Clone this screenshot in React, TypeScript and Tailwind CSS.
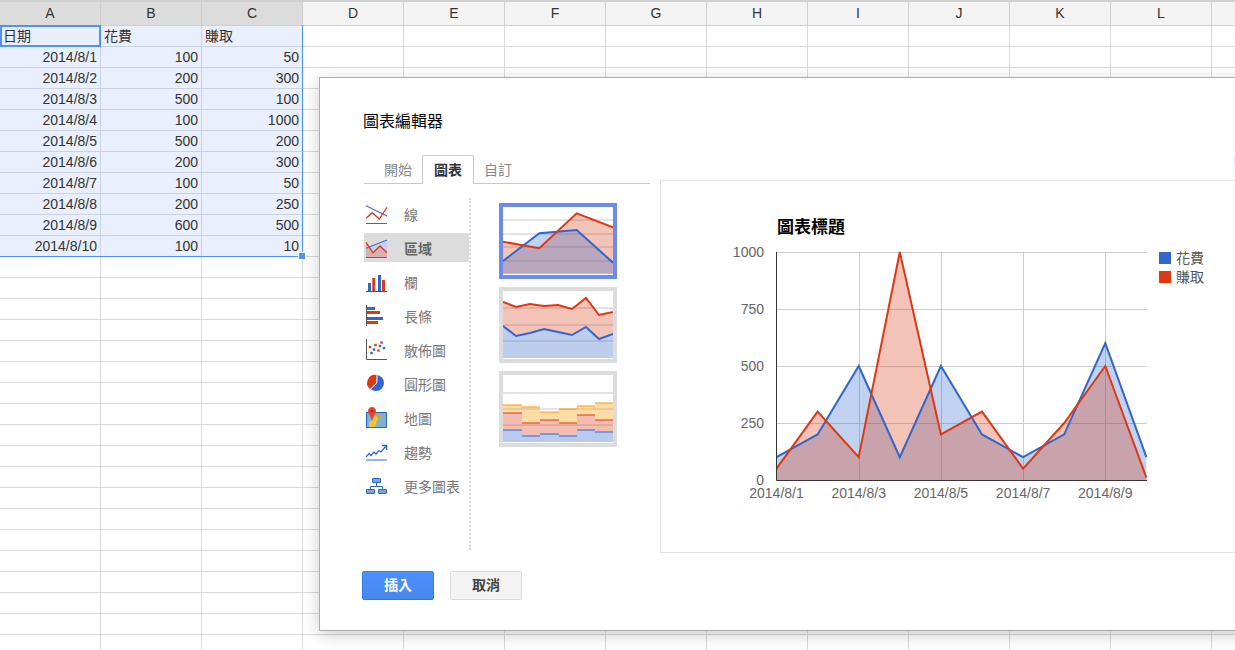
const cols = ["A", "B", "C", "D", "E", "F", "G", "H", "I", "J", "K", "L", ""];

const data = [
  ["日期", "花費", "賺取"],
  ["2014/8/1", "100", "50"],
  ["2014/8/2", "200", "300"],
  ["2014/8/3", "500", "100"],
  ["2014/8/4", "100", "1000"],
  ["2014/8/5", "500", "200"],
  ["2014/8/6", "200", "300"],
  ["2014/8/7", "100", "50"],
  ["2014/8/8", "200", "250"],
  ["2014/8/9", "600", "500"],
  ["2014/8/10", "100", "10"],
];

const spend = [100, 200, 500, 100, 500, 200, 100, 200, 600, 100];
const earn = [50, 300, 100, 1000, 200, 300, 50, 250, 500, 10];

const px = (i: number) => 776.5 + i * 41.1;
const py = (v: number) => 480 - v * 0.228;
const line = (vals: number[]) => vals.map((v, i) => `${px(i)},${py(v)}`).join(" ");
const area = (vals: number[]) => `${px(0)},480 ${line(vals)} ${px(9)},480`;

function Sheet() {
  const rows = Array.from({ length: 30 }, (_, i) => i);
  return (
    <div className="flex flex-col">
      <div className="flex h-[26px] border-t-2 border-[#d0d0d0]">
        {cols.map((c, i) => (
          <div
            key={i}
            className={`w-[101px] shrink-0 flex items-center justify-center border-r border-b border-[#cfcfcf] text-[14px] text-[#333] ${i < 3 ? "bg-[#dcdcdc]" : "bg-[#f3f3f3]"}`}
          >
            {c}
          </div>
        ))}
      </div>
      {rows.map((r) => (
        <div key={r} className="flex h-[21px]">
          {cols.map((c, i) => {
            const value = i < 3 && data[r] ? data[r][i] : "";
            const selected = i < 3 && r < 11;
            return (
              <div
                key={i}
                className={`w-[101px] shrink-0 border-r border-b px-[3px] text-[14px] leading-[20px] text-[#333] whitespace-nowrap overflow-hidden ${selected ? "bg-[#e9effc] border-[#cbd2e0]" : "bg-white border-[#d9d9d9]"} ${r > 0 ? "text-right" : "text-left"}`}
              >
                {value}
              </div>
            );
          })}
        </div>
      ))}
    </div>
  );
}

function LineIcon() {
  return (
    <svg width="24" height="24" viewBox="0 0 24 24" fill="none">
      <path d="M1 2.7 22 13" stroke="#3a6fd8" strokeWidth="1.2" />
      <path d="M1 15.3 7.3 9.7 14.3 16 22 4.3" stroke="#dc3912" strokeWidth="1.3" />
      <path d="M1 20.5H22" stroke="#666" strokeWidth="1" />
    </svg>
  );
}

function AreaIcon() {
  return (
    <svg width="24" height="24" viewBox="0 0 24 24" fill="none">
      <path d="M1 11.3 22 3V20H1Z" fill="#c5d3f0" />
      <path d="M1 5.3 8 15.7 15 9 22 15.7V20.5H1Z" fill="#d8b2b2" />
      <path d="M1 11.3 22 3" stroke="#3a6fd8" strokeWidth="1.2" />
      <path d="M1 5.3 8 15.7 15 9 22 15.7" stroke="#dc3912" strokeWidth="1.3" />
      <path d="M1 20.5H22" stroke="#666" strokeWidth="1" />
    </svg>
  );
}

function ColumnIcon() {
  return (
    <svg width="24" height="24" viewBox="0 0 24 24" fill="none">
      <rect x="3" y="12" width="3" height="8" fill="#3366cc" />
      <rect x="7.3" y="7" width="3" height="13" fill="#dc3912" />
      <rect x="13" y="4" width="3" height="16" fill="#3366cc" />
      <rect x="17" y="9" width="3" height="11" fill="#dc3912" />
      <path d="M1 20.5H22" stroke="#555" strokeWidth="1" />
    </svg>
  );
}

function BarIcon() {
  return (
    <svg width="24" height="24" viewBox="0 0 24 24" fill="none">
      <rect x="2" y="2" width="8" height="3" fill="#3366cc" />
      <rect x="2" y="6" width="13" height="3" fill="#dc3912" />
      <rect x="2" y="12" width="16" height="3" fill="#3366cc" />
      <rect x="2" y="16" width="11" height="3" fill="#dc3912" />
      <path d="M1.5 0V21" stroke="#555" strokeWidth="1" />
    </svg>
  );
}

function ScatterIcon() {
  const red = [[5, 8], [10.5, 6], [13.5, 11.5], [16.5, 3.5]];
  const blue = [[6.5, 14], [9, 10.5], [15, 7], [19, 9]];
  return (
    <svg width="24" height="24" viewBox="0 0 24 24" fill="none">
      <path d="M1.5 0V20.5H22" stroke="#555" strokeWidth="1" />
      {red.map(([x, y]) => (
        <rect key={`${x}`} x={x - 1.2} y={y - 1.2} width="2.4" height="2.4" fill="#dc3912" />
      ))}
      {blue.map(([x, y]) => (
        <rect key={`${x}`} x={x - 1.2} y={y - 1.2} width="2.4" height="2.4" fill="#3366cc" />
      ))}
    </svg>
  );
}

function PieIcon() {
  return (
    <svg width="24" height="24" viewBox="0 0 24 24" fill="none">
      <circle cx="11" cy="10" r="8" fill="#3366cc" />
      <path d="M11.6 9.6 5 16A8 8 0 0 1 11.6 2Z" fill="#dc3912" />
      <path d="M12 2 11.8 10 5.5 16" stroke="#fff" strokeWidth="1" />
    </svg>
  );
}

function MapIcon() {
  return (
    <svg width="24" height="24" viewBox="0 0 24 24" fill="none">
      <rect x="1.5" y="5.5" width="20" height="15" fill="#7fb1d3" stroke="#2f62b8" />
      <path d="M4 20V15L8 13 9 9 13 8 15 10 12 14 10 20Z" fill="#f1c232" />
      <path d="M11 7 15 6 17 10 13 12Z" fill="#b9a66b" />
      <path d="M7 0C4.5 0 3 2 3 4C3 7 6 9 7 14C8 9 11 7 11 4C11 2 9.5 0 7 0Z" fill="#e0452f" />
      <circle cx="7" cy="4" r="1.3" fill="#a52714" />
    </svg>
  );
}

function TrendIcon() {
  return (
    <svg width="24" height="24" viewBox="0 0 24 24" fill="none">
      <path d="M1 16 4 12.5 6 14.5 9 11 11 13 14 9.5 16 11 21 5" stroke="#3366cc" strokeWidth="1.2" />
      <path d="M17 4.5H21.5V9" stroke="#3366cc" strokeWidth="1.5" />
      <path d="M1 19H22" stroke="#3366cc" strokeWidth="1" />
    </svg>
  );
}

function MoreIcon() {
  return (
    <svg width="24" height="24" viewBox="0 0 24 24" fill="none">
      <rect x="7.5" y="3.5" width="8" height="4" rx="0.5" fill="#7ea3e0" stroke="#2f62b8" />
      <rect x="1.5" y="14.5" width="8" height="4" rx="0.5" fill="#7ea3e0" stroke="#2f62b8" />
      <rect x="13.5" y="14.5" width="8" height="4" rx="0.5" fill="#7ea3e0" stroke="#2f62b8" />
      <path d="M11.5 7.5V11.5M5.5 14.5V11.5H17.5V14.5" stroke="#2f62b8" strokeWidth="1" />
    </svg>
  );
}

const chartTypes = [
  { label: "線", icon: <LineIcon /> },
  { label: "區域", icon: <AreaIcon />, active: true },
  { label: "欄", icon: <ColumnIcon /> },
  { label: "長條", icon: <BarIcon /> },
  { label: "散佈圖", icon: <ScatterIcon /> },
  { label: "圓形圖", icon: <PieIcon /> },
  { label: "地圖", icon: <MapIcon /> },
  { label: "趨勢", icon: <TrendIcon /> },
  { label: "更多圖表", icon: <MoreIcon /> },
];

function ThumbGrid({ ys }: { ys: number[] }) {
  return (
    <>
      {ys.map((y) => (
        <path key={y} d={`M0 ${y}H110`} stroke="#c8c8c8" strokeWidth="1" />
      ))}
    </>
  );
}

function ThumbOverlap() {
  return (
    <svg width="110" height="68" viewBox="0 0 110 68" className="block">
      <ThumbGrid ys={[13, 27, 40, 54]} />
      <path d="M0 34.7 36.3 41.3 73.7 6.3 110 20.3V66.7H0Z" fill="#dc3912" fillOpacity="0.3" />
      <path d="M0 54 36.3 26.3 73.7 23 110 55.7V66.7H0Z" fill="#3366cc" fillOpacity="0.3" />
      <path d="M0 54 36.3 26.3 73.7 23 110 55.7" stroke="#3366cc" strokeWidth="2" fill="none" />
      <path d="M0 34.7 36.3 41.3 73.7 6.3 110 20.3" stroke="#dc3912" strokeWidth="2" fill="none" />
    </svg>
  );
}

function ThumbStacked() {
  const xs = [0, 13, 27, 41, 55, 69, 83, 96, 110];
  const red = [11, 16, 13, 15, 14, 18, 7, 24, 21];
  const blue = [35, 45, 42, 38, 41, 44, 36, 48, 43];
  const rp = xs.map((x, i) => `${x},${red[i]}`).join(" ");
  const bp = xs.map((x, i) => `${x},${blue[i]}`).join(" ");
  return (
    <svg width="110" height="68" viewBox="0 0 110 68" className="block">
      <ThumbGrid ys={[17, 34, 50]} />
      <polygon points={`0,67 ${bp} 110,67`} fill="#3366cc" fillOpacity="0.33" />
      <polygon points={`${rp} ${[...xs].reverse().map((x, i) => `${x},${[...blue].reverse()[i]}`).join(" ")}`} fill="#dc3912" fillOpacity="0.3" />
      <polyline points={bp} stroke="#3366cc" strokeWidth="2" fill="none" />
      <polyline points={rp} stroke="#dc3912" strokeWidth="2" fill="none" />
    </svg>
  );
}

function ThumbStepped() {
  const edges = [0, 19, 37, 56, 74, 92, 110];
  const blue = [55, 61, 59, 61, 55, 57];
  const red = [38, 48, 45, 48, 40, 45];
  const orange = [30, 32, 37, 34, 31, 28];
  return (
    <svg width="110" height="68" viewBox="0 0 110 68" className="block">
      <ThumbGrid ys={[18, 34, 50]} />
      {edges.slice(0, 6).map((x, i) => {
        const w = edges[i + 1] - x;
        return (
          <g key={x}>
            <rect x={x} y={orange[i]} width={w} height={red[i] - orange[i]} fill="#ff9900" fillOpacity="0.35" />
            <rect x={x} y={red[i]} width={w} height={blue[i] - red[i]} fill="#dc3912" fillOpacity="0.33" />
            <rect x={x} y={blue[i]} width={w} height={67 - blue[i]} fill="#3366cc" fillOpacity="0.35" />
            <path d={`M${x} ${orange[i]}h${w}`} stroke="#ff9900" strokeWidth="1" />
            <path d={`M${x} ${red[i]}h${w}`} stroke="#dc3912" strokeWidth="1" />
            <path d={`M${x} ${blue[i]}h${w}`} stroke="#3366cc" strokeWidth="1" />
          </g>
        );
      })}
    </svg>
  );
}

function Chart() {
  const ticks = [
    { v: 0, label: "0" },
    { v: 250, label: "250" },
    { v: 500, label: "500" },
    { v: 750, label: "750" },
    { v: 1000, label: "1000" },
  ];
  return (
    <svg width="580" height="371" viewBox="661 181 580 371" className="block">
      <text x="777" y="233" fontSize="17" fontWeight="700" fill="#000">圖表標題</text>
      {ticks.slice(1).map((t) => (
        <path key={t.v} d={`M776 ${py(t.v) + 0.5}H1147`} stroke="#cccccc" />
      ))}
      {[2, 4, 6, 8].map((i) => (
        <path key={i} d={`M${Math.round(px(i)) + 0.5} 252V480`} stroke="#cccccc" />
      ))}
      <polygon points={area(spend)} fill="#3366cc" fillOpacity="0.3" />
      <polygon points={area(earn)} fill="#dc3912" fillOpacity="0.3" />
      <polyline points={line(spend)} fill="none" stroke="#3366cc" strokeWidth="2" />
      <polyline points={line(earn)} fill="none" stroke="#dc3912" strokeWidth="2" />
      <path d="M776.5 252V480.5H1147" fill="none" stroke="#333" />
      {ticks.map((t) => (
        <text key={t.v} x="764" y={py(t.v) + 5} fontSize="14" textAnchor="end" fill="#666">{t.label}</text>
      ))}
      {[1, 3, 5, 7, 9].map((d, i) => (
        <text key={d} x={px(i * 2)} y="498" fontSize="14" textAnchor="middle" fill="#666">{`2014/8/${d}`}</text>
      ))}
      <rect x="1159" y="252" width="12" height="12" fill="#3366cc" />
      <text x="1176" y="263" fontSize="14" fill="#555">花費</text>
      <rect x="1159" y="271" width="12" height="12" fill="#dc3912" />
      <text x="1176" y="282" fontSize="14" fill="#555">賺取</text>
    </svg>
  );
}

function Dialog() {
  return (
    <div className="absolute left-[319px] top-[77px] w-[1000px] h-[554px] bg-white border border-[#acacac] shadow-[0_4px_16px_rgba(0,0,0,0.2)] flex flex-col pl-[43px] text-[#333]">
      <div className="mt-[33px] h-[22px] text-[16px] leading-[22px] text-black">圖表編輯器</div>

      <div className="absolute left-[914px] top-[78px] w-[2px] h-[9px] bg-[#dfe3f5]" />

      <div className="flex gap-[10px] items-start">
        <div className="w-[286px] shrink-0 ml-px">
          <div className="mt-[22px] flex h-[29px] border-b border-[#c8c8c8] pl-[20px] text-[14px]">
            <div className="pt-[5px] text-[#888]">開始</div>
            <div className="ml-[10px] -mb-px w-[52px] border border-b-white border-[#c8c8c8] rounded-t-[2px] bg-white text-center pt-[4px] font-bold text-[#333]">圖表</div>
            <div className="ml-[10px] pt-[5px] text-[#888]">自訂</div>
          </div>

          <div className="flex mt-[14px] h-[352px]">
            <div className="w-[105px] shrink-0 flex flex-col">
              {chartTypes.map((t) => (
                <div
                  key={t.label}
                  className={`h-[34px] text-[14px] ${t.active ? "font-bold text-[#666]" : "text-[#777]"}`}
                >
                  <div className={`mt-px h-[29px] pt-[3px] pl-px flex items-center w-full ${t.active ? "bg-[#dcdcdc]" : ""}`}>
                    <div className="w-[39px] shrink-0">{t.icon}</div>
                    <span>{t.label}</span>
                  </div>
                </div>
              ))}
            </div>
            <div className="w-0 border-l-2 border-dotted border-[#d9d9d9]" />
            <div className="ml-[28px] mt-[5px] flex flex-col gap-2">
              <div className="border-4 border-[#6d8bee] bg-white w-[118px] h-[76px]"><ThumbOverlap /></div>
              <div className="border-4 border-[#dcdcdc] bg-white w-[118px] h-[76px]"><ThumbStacked /></div>
              <div className="border-4 border-[#dcdcdc] bg-white w-[118px] h-[76px]"><ThumbStepped /></div>
            </div>
          </div>
        </div>

        <div className="mt-[47px] h-[373px] flex-1 border border-[#e3e3e3] border-r-0">
          <Chart />
        </div>
      </div>

      <div className="mt-[18px] -ml-px flex gap-4">
        <button className="w-[72px] h-[29px] rounded-[2px] border border-[#3079ed] bg-gradient-to-b from-[#4d90fe] to-[#4787ed] text-[14px] font-bold text-white">插入</button>
        <button className="w-[72px] h-[29px] rounded-[2px] border border-[#dcdcdc] bg-[#f3f3f3] text-[14px] font-bold text-[#444]">取消</button>
      </div>
    </div>
  );
}

export default function App() {
  return (
    <div className="relative w-[1235px] h-[650px] overflow-hidden bg-white font-['Liberation_Sans','Noto_Sans_CJK_TC',sans-serif]">
      <Sheet />
      {/* selection outline */}
      <div className="absolute left-0 top-[25px] w-[303px] h-[232px] border-r border-b border-[#4d90fe] pointer-events-none" />
      <div className="absolute left-0 top-[25px] w-[101px] h-[22px] border-2 border-[#4d90fe] pointer-events-none" />
      <div className="absolute left-[299px] top-[253px] size-[6px] bg-[#4d90fe] border border-white box-content -m-px" />
      <Dialog />
    </div>
  );
}
